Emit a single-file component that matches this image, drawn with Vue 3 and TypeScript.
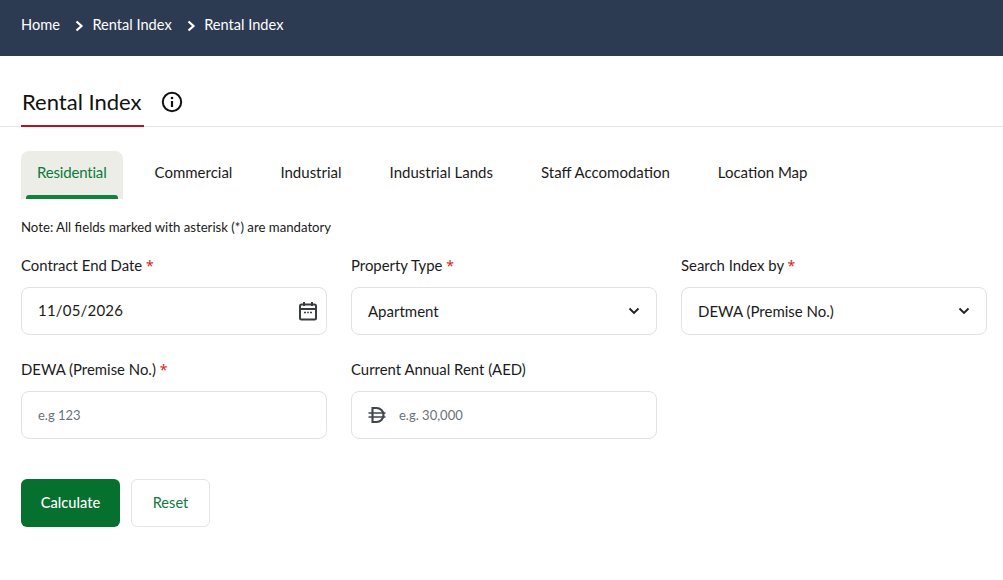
<script setup lang="ts">
const tabs: string[] = ['Residential', 'Commercial', 'Industrial', 'Industrial Lands', 'Staff Accomodation', 'Location Map']
</script>

<template>
  <div class="page">
    <nav class="crumbs">
      <span>Home</span>
      <svg class="chev" viewBox="0 0 10 12" width="10" height="12"><path d="M2.5 1.5 7.5 6 2.5 10.5" fill="none" stroke="#fff" stroke-width="2.2" /></svg>
      <span>Rental Index</span>
      <svg class="chev" viewBox="0 0 10 12" width="10" height="12"><path d="M2.5 1.5 7.5 6 2.5 10.5" fill="none" stroke="#fff" stroke-width="2.2" /></svg>
      <span>Rental Index</span>
    </nav>
    <div class="head">
      <h1>Rental Index</h1>
      <svg class="info" viewBox="0 0 22 22" width="22" height="22">
        <circle cx="11" cy="11" r="9.2" fill="none" stroke="#111" stroke-width="2" />
        <path d="M11 10v6" stroke="#111" stroke-width="2.2" />
        <circle cx="11" cy="7" r="1.3" fill="#111" />
      </svg>
    </div>
    <div class="tabs">
      <div v-for="(t, i) in tabs" :key="t" class="tab" :class="{ active: i === 0 }">{{ t }}</div>
    </div>
    <p class="note">Note: All fields marked with asterisk (*) are mandatory</p>
    <div class="grid">
      <div class="field">
        <label>Contract End Date <b>*</b></label>
        <div class="box date">
          <span>11/05/2026</span>
          <svg viewBox="0 0 20 20" width="20" height="20" fill="none" stroke="#3a3d40" stroke-width="2">
            <rect x="2" y="3.5" width="16" height="15" rx="1.5" />
            <path d="M2 8h16M6 1v4M14 1v4" />
            <path d="M6 11.5h2M9.2 11.5h1.6M12 11.5h2" stroke-width="1.6" />
          </svg>
        </div>
      </div>
      <div class="field">
        <label>Property Type <b>*</b></label>
        <div class="box select">
          <span>Apartment</span>
          <svg viewBox="0 0 12 8" width="12" height="8"><path d="M1.5 1.5 6 6l4.5-4.5" fill="none" stroke="#222" stroke-width="1.9" /></svg>
        </div>
      </div>
      <div class="field">
        <label>Search Index by <b>*</b></label>
        <div class="box select">
          <span>DEWA (Premise No.)</span>
          <svg viewBox="0 0 12 8" width="12" height="8"><path d="M1.5 1.5 6 6l4.5-4.5" fill="none" stroke="#222" stroke-width="1.9" /></svg>
        </div>
      </div>
      <div class="field">
        <label>DEWA (Premise No.) <b>*</b></label>
        <div class="box ph"><span>e.g 123</span></div>
      </div>
      <div class="field">
        <label>Current Annual Rent (AED)</label>
        <div class="box ph rent">
          <svg viewBox="0 0 18 18" width="18" height="18" fill="none" stroke="#3f464d" stroke-width="2.1">
            <path d="M4.5 2h4a7 7 0 0 1 0 14h-4z" />
            <path d="M0.5 7h17M0.5 11h17" stroke-width="1.5" />
          </svg>
          <span>e.g. 30,000</span>
        </div>
      </div>
    </div>
    <div class="actions">
      <button class="primary" type="button">Calculate</button>
      <button class="ghost" type="button">Reset</button>
    </div>
  </div>
</template>

<style scoped>
.page { width: 1003px; height: 580px; overflow: hidden; background: #fff; font-family: Lato, sans-serif; color: #1b1b1b; font-size: 14.9px; }
.crumbs { height: 56px; box-sizing: border-box; background: #2c3a52; color: #fff; display: flex; align-items: flex-start; padding: 15px 0 0 21px; font-size: 14.6px; line-height: 19px; }
.chev { margin: 5px 8.5px 0 14px; }
.head { margin-top: 31px; height: 39px; border-bottom: 1px solid #e3e5e8; display: flex; align-items: flex-start; padding-left: 21px; }
h1 { margin: 0; height: 38px; width: 122px; padding-left: 1px; border-bottom: 2px solid #b3151b; font-size: 22px; font-weight: 400; line-height: 29px; color: #111; }
.info { margin: 4px 0 0 17px; }
.tabs { display: flex; margin: 24px 0 0 21px; gap: 16px; }
.tab { position: relative; height: 48px; box-sizing: border-box; padding: 12px 16px 0; font-size: 15px; line-height: 19px; border-radius: 8px 8px 0 0; color: #1b1b1b; }
.tab.active { background: #ecede7; color: #0d7a3a; letter-spacing: -0.18px; }
.tab.active::after { content: ""; position: absolute; left: 5px; right: 5px; bottom: 0; height: 4px; background: #12813d; border-radius: 3px 3px 0 0; }
.note { margin: 19px 0 0 21px; font-size: 13.2px; line-height: 18px; }
.grid { display: grid; grid-template-columns: repeat(3, 306px); column-gap: 24px; row-gap: 25px; margin: 20px 0 0 21px; }
label { display: block; height: 19px; line-height: 19px; margin-bottom: 12px; }
label b { color: #d81e1e; font: 400 14px/1 "Noto Sans", sans-serif; }
.box { height: 48px; box-sizing: border-box; border: 1px solid #dfe2e6; border-radius: 8px; display: flex; align-items: center; justify-content: space-between; padding: 0 16px; font-size: 15px; }
.date { padding-right: 8px; letter-spacing: 0.2px; }
.date span { position: relative; top: -1px; }
.ph { color: #6b7178; font-size: 13px; }
.rent { justify-content: flex-start; gap: 13px; }
.actions { display: flex; gap: 11px; margin: 40px 0 0 21px; }
button { height: 48px; border-radius: 6px; font: 14.6px Lato, sans-serif; padding: 0 0 2px; }
.primary { width: 99px; border: 0; background: #06702f; color: #fff; font-weight: 500; }
.ghost { width: 79px; border: 1px solid #e3e5e8; background: #fff; color: #0d7a3a; }
</style>
